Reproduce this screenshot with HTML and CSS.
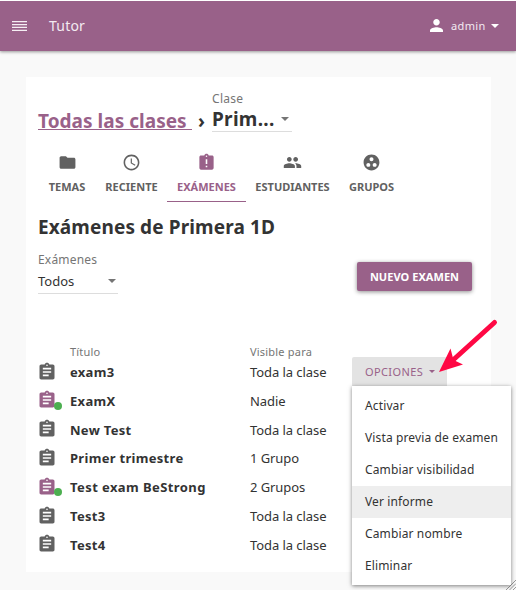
FILE: index.html
```html
<!DOCTYPE html>
<html lang="es">
<head>
<meta charset="utf-8">
<title>Tutor</title>
<link rel="stylesheet" href="styles.css">
</head>
<body>
<svg class="defs" aria-hidden="true">
  <symbol id="clip" viewBox="0 0 24 24"><path d="M19 3h-4.18C14.4 1.84 13.3 1 12 1c-1.3 0-2.4.84-2.82 2H5c-1.1 0-2 .9-2 2v14c0 1.1.9 2 2 2h14c1.1 0 2-.9 2-2V5c0-1.1-.9-2-2-2zm-7 0c.55 0 1 .45 1 1s-.45 1-1 1-1-.45-1-1 .45-1 1-1zm2 14H7v-2h7v2zm3-4H7v-2h10v2zm0-4H7V7h10v2z"/></symbol>
</svg>
<header class="bar">
  <svg class="burger" viewBox="0 0 15 10"><path d="M0 .7h15M0 3.6h15M0 6.400h15M0 9.300h15"/></svg>
  <span class="brand">Tutor</span>
  <div class="user">
    <svg class="person" viewBox="4 4 16 16"><path d="M12 12c2.21 0 4-1.79 4-4s-1.79-4-4-4-4 1.79-4 4 1.79 4 4 4zm0 2c-2.67 0-8 1.34-8 4v2h16v-2c0-2.66-5.33-4-8-4z"/></svg>
    <span class="name">admin</span>
    <i class="caret"></i>
  </div>
</header>
<main class="card">
  <div class="crumbs">
    <a class="all">Todas las clases</a>
    <span class="sep">›</span>
    <div class="select class-select">
      <span class="label">Clase</span>
      <div class="value"><b>Prim...</b><i class="caret"></i></div>
    </div>
  </div>
  <nav class="tabs">
    <div class="tab"><svg viewBox="0 0 24 24"><path d="M10 4H4c-1.1 0-2 .9-2 2v12c0 1.1.9 2 2 2h16c1.1 0 2-.9 2-2V8c0-1.1-.9-2-2-2h-8l-2-2z"/></svg><span>TEMAS</span></div>
    <div class="tab"><svg viewBox="0 0 24 24"><path d="M11.99 2C6.47 2 2 6.48 2 12s4.47 10 9.99 10C17.52 22 22 17.52 22 12S17.52 2 11.99 2zM12 20c-4.42 0-8-3.58-8-8s3.58-8 8-8 8 3.58 8 8-3.58 8-8 8zm.5-13H11v6l5.25 3.15.75-1.23-4.5-2.67z"/></svg><span>RECIENTE</span></div>
    <div class="tab active"><svg viewBox="0 0 24 24"><path d="M19 3h-4.18C14.4 1.84 13.3 1 12 1c-1.3 0-2.4.84-2.82 2H5c-1.1 0-2 .9-2 2v14c0 1.1.9 2 2 2h14c1.1 0 2-.9 2-2V5c0-1.1-.9-2-2-2zm-6 15h-2v-2h2v2zm0-4h-2V8h2v6zm-1-9c-.55 0-1-.45-1-1s.45-1 1-1 1 .45 1 1-.45 1-1 1z"/></svg><span>EXÁMENES</span></div>
    <div class="tab"><svg viewBox="0 0 24 24"><path d="M16 11c1.660 0 2.990-1.340 2.990-3S17.660 5 16 5s-3 1.340-3 3 1.340 3 3 3zm-8 0c1.660 0 2.990-1.340 2.990-3S9.660 5 8 5 5 6.340 5 8s1.340 3 3 3zm0 2c-2.330 0-7 1.170-7 3.500V19h14v-2.500c0-2.330-4.670-3.500-7-3.500zm8 0c-.29 0-.62.02-.97.05 1.160.84 1.970 1.970 1.970 3.450V19h6v-2.500c0-2.330-4.670-3.500-7-3.500z"/></svg><span>ESTUDIANTES</span></div>
    <div class="tab"><svg viewBox="0 0 24 24"><path d="M12 2C6.48 2 2 6.48 2 12s4.480 10 10 10 10-4.480 10-10S17.520 2 12 2zM8 17.500c-1.380 0-2.500-1.120-2.500-2.500s1.120-2.500 2.500-2.500 2.500 1.120 2.500 2.500-1.120 2.500-2.500 2.500zM9.500 8c0-1.380 1.120-2.500 2.500-2.500s2.500 1.120 2.500 2.500-1.120 2.500-2.500 2.500S9.500 9.380 9.500 8zm6.500 9.500c-1.380 0-2.500-1.120-2.500-2.500s1.120-2.500 2.500-2.500 2.500 1.120 2.500 2.500-1.120 2.500-2.500 2.500z"/></svg><span>GRUPOS</span></div>
  </nav>
  <h1>Exámenes de Primera 1D</h1>
  <div class="filter">
    <div class="select exam-select">
      <span class="label">Exámenes</span>
      <div class="value"><span>Todos</span><i class="caret"></i></div>
    </div>
    <button class="new">NUEVO EXAMEN</button>
  </div>
  <div class="table">
    <div class="head"><span>Título</span><span>Visible para</span></div>
    <div class="row"><span class="ico"><svg><use href="#clip"/></svg></span><b>exam3</b><span>Toda la clase</span>
      <div class="options">
        <button class="opt"><span>OPCIONES</span><i class="caret"></i></button>
        <div class="menu">
          <div>Activar</div><div>Vista previa de examen</div><div>Cambiar visibilidad</div><div class="hover">Ver informe</div><div>Cambiar nombre</div><div>Eliminar</div>
        </div>
        <svg class="arrow" viewBox="0 0 60 60"><path class="shaft" d="M55.500 5.500L13 44"/><path d="M0 55L11.500 31.500l3 11.500 9.500 4.500z"/></svg>
      </div>
    </div>
    <div class="row on"><span class="ico"><svg><use href="#clip"/></svg></span><b>ExamX</b><span>Nadie</span></div>
    <div class="row"><span class="ico"><svg><use href="#clip"/></svg></span><b>New Test</b><span>Toda la clase</span></div>
    <div class="row"><span class="ico"><svg><use href="#clip"/></svg></span><b>Primer trimestre</b><span>1 Grupo</span></div>
    <div class="row on"><span class="ico"><svg><use href="#clip"/></svg></span><b class="long">Test exam BeStrong</b><span>2 Grupos</span></div>
    <div class="row"><span class="ico"><svg><use href="#clip"/></svg></span><b>Test3</b><span>Toda la clase</span></div>
    <div class="row"><span class="ico"><svg><use href="#clip"/></svg></span><b>Test4</b><span>Toda la clase</span></div>
  </div>
</main>
<svg class="grip" viewBox="0 0 10 10"><path d="M0 10L10 0M3.500 10L10 3.500M7 10l3-3"/></svg>
</body>
</html>
```
FILE: styles.css
```css
* { box-sizing: border-box; }
html { background: #f9f9f9; overflow: hidden; }
body { margin: 0; height: 590px; overflow: hidden; border-top: 1px solid #fff; font: 13px/18px "Noto Sans", sans-serif; color: #333; position: relative; }
svg { display: block; fill: currentColor; }
.defs { position: absolute; width: 0; height: 0; }
.caret { display: block; border: 4px solid transparent; border-top-color: #757575; border-bottom: 0; }

.bar { height: 50px; background: #996189; color: #fff; display: flex; align-items: center; padding: 0 17px 0 12px; box-shadow: 0 1px 3px rgba(0,0,0,.4); }
.burger { width: 15px; height: 10px; stroke: #f6eff4; stroke-width: 1.25; margin-top: -1px; }
.brand { margin-left: 22px; font-size: 14px; letter-spacing: .2px; color: #f3eaf1; }
.user { margin-left: auto; display: flex; align-items: center; }
.person { width: 13px; height: 13px; margin-right: 8px; position: relative; top: -1px; }
.name { font-size: 11px; letter-spacing: .35px; width: 40px; color: #f3eaf1; }
.bar .caret { border-top-color: #fff; }

.card { width: 465px; height: 495px; margin: 26px 0 0 26px; padding: 12px; background: #fff; }
.crumbs { display: flex; height: 43px; align-items: flex-start; }
.all { margin-top: 20px; width: 154px; height: 21px; line-height: 24px; font-size: 19px; font-weight: 700; letter-spacing: .03px; color: #996189; border-bottom: 1px solid #996189; white-space: nowrap; }
.sep { width: 20px; padding-left: 6px; margin-top: 20px; font-size: 19px; line-height: 24px; font-weight: 700; }
.select { width: 80px; border-bottom: 1px solid #ddd; }
.label { display: block; color: #757575; font-size: 12px; line-height: 20px; letter-spacing: .3px; }
.value { display: flex; justify-content: space-between; align-items: center; padding-right: 2px; }
.class-select .label { height: 18px; }
.class-select .value { height: 24px; padding-right: 3px; font-size: 19px; line-height: 24px; letter-spacing: .3px; }

.tabs { display: grid; grid-template-columns: 58px 71px 79px 93px 65px; margin-top: 12px; height: 58px; }
.tab { display: flex; flex-direction: column; align-items: center; padding-top: 9px; color: #616161; font-size: 11px; font-weight: 700; border-bottom: 1px solid transparent; }
.tab svg { width: 19px; height: 19px; margin-bottom: 7px; }
.tab span { line-height: 16px; white-space: nowrap; }
.active { color: #996189; border-color: #996189; }

h1 { margin: 12px 0 0; font-size: 19px; line-height: 26px; height: 26px; letter-spacing: .12px; }
.filter { display: flex; justify-content: space-between; padding-right: 7px; margin-top: 10px; height: 44px; }
.exam-select .label { height: 18px; letter-spacing: .2px; }
.exam-select .value { height: 25px; }
.new { width: 115px; height: 29px; margin-top: 12px; padding: 0; border: 0; border-radius: 2px; background: #996189; color: #fff; font: 700 11px/29px "Noto Sans", sans-serif; letter-spacing: .05px; white-space: nowrap; box-shadow: 0 1px 4px rgba(0,0,0,.45); }

.table { margin-top: 50px; }
.head { display: grid; grid-template-columns: 180px 1fr; padding-left: 32px; font-size: 11px; line-height: 16px; color: #757575; letter-spacing: .2px; }
.row { display: grid; grid-template-columns: 32px 180px 102px 95px; height: 28.83px; line-height: 28.83px; letter-spacing: -.07px; white-space: nowrap; position: relative; top: -2px; }
.row b { letter-spacing: .3px; }
.row .long { letter-spacing: .42px; }
.ico { width: 20px; height: 20px; margin: 3.5px 0 0 -1px; position: relative; color: #616161; }
.ico svg { width: 20px; height: 20px; }
.on .ico { color: #996189; }
.on .ico::after { content: ""; position: absolute; left: 17px; top: 11.5px; width: 8px; height: 8px; border-radius: 50%; background: #4caf50; }
.options { position: relative; z-index: 2; height: 29px; margin-top: -1px; }
.opt { width: 95px; height: 29px; border: 0; padding: 0 12px 0 13px; background: #e3e3e3; border-radius: 2px 2px 0 0; color: #996189; font: 11px/29px "Noto Sans", sans-serif; letter-spacing: .38px; display: flex; align-items: center; justify-content: space-between; }
.opt .caret { border-width: 3px 3px 0; border-top-color: #996189; }
.menu { position: absolute; top: 29px; left: 0; width: 159px; height: 199px; padding-top: 4px; background: #fff; font-size: 12px; line-height: 32px; box-shadow: 0 1px 4px rgba(0,0,0,.5); }
.menu div { height: 32px; padding-left: 13px; letter-spacing: .13px; }
.menu .hover { background: #eee; }
.arrow { position: absolute; left: 87px; top: -40px; width: 60px; height: 60px; fill: #ff0844; }
.shaft { stroke: #ff0844; stroke-width: 5; stroke-linecap: round; }
.grip { position: absolute; right: 0; bottom: 0; width: 10px; height: 10px; stroke: #999; stroke-width: 1; }
```
